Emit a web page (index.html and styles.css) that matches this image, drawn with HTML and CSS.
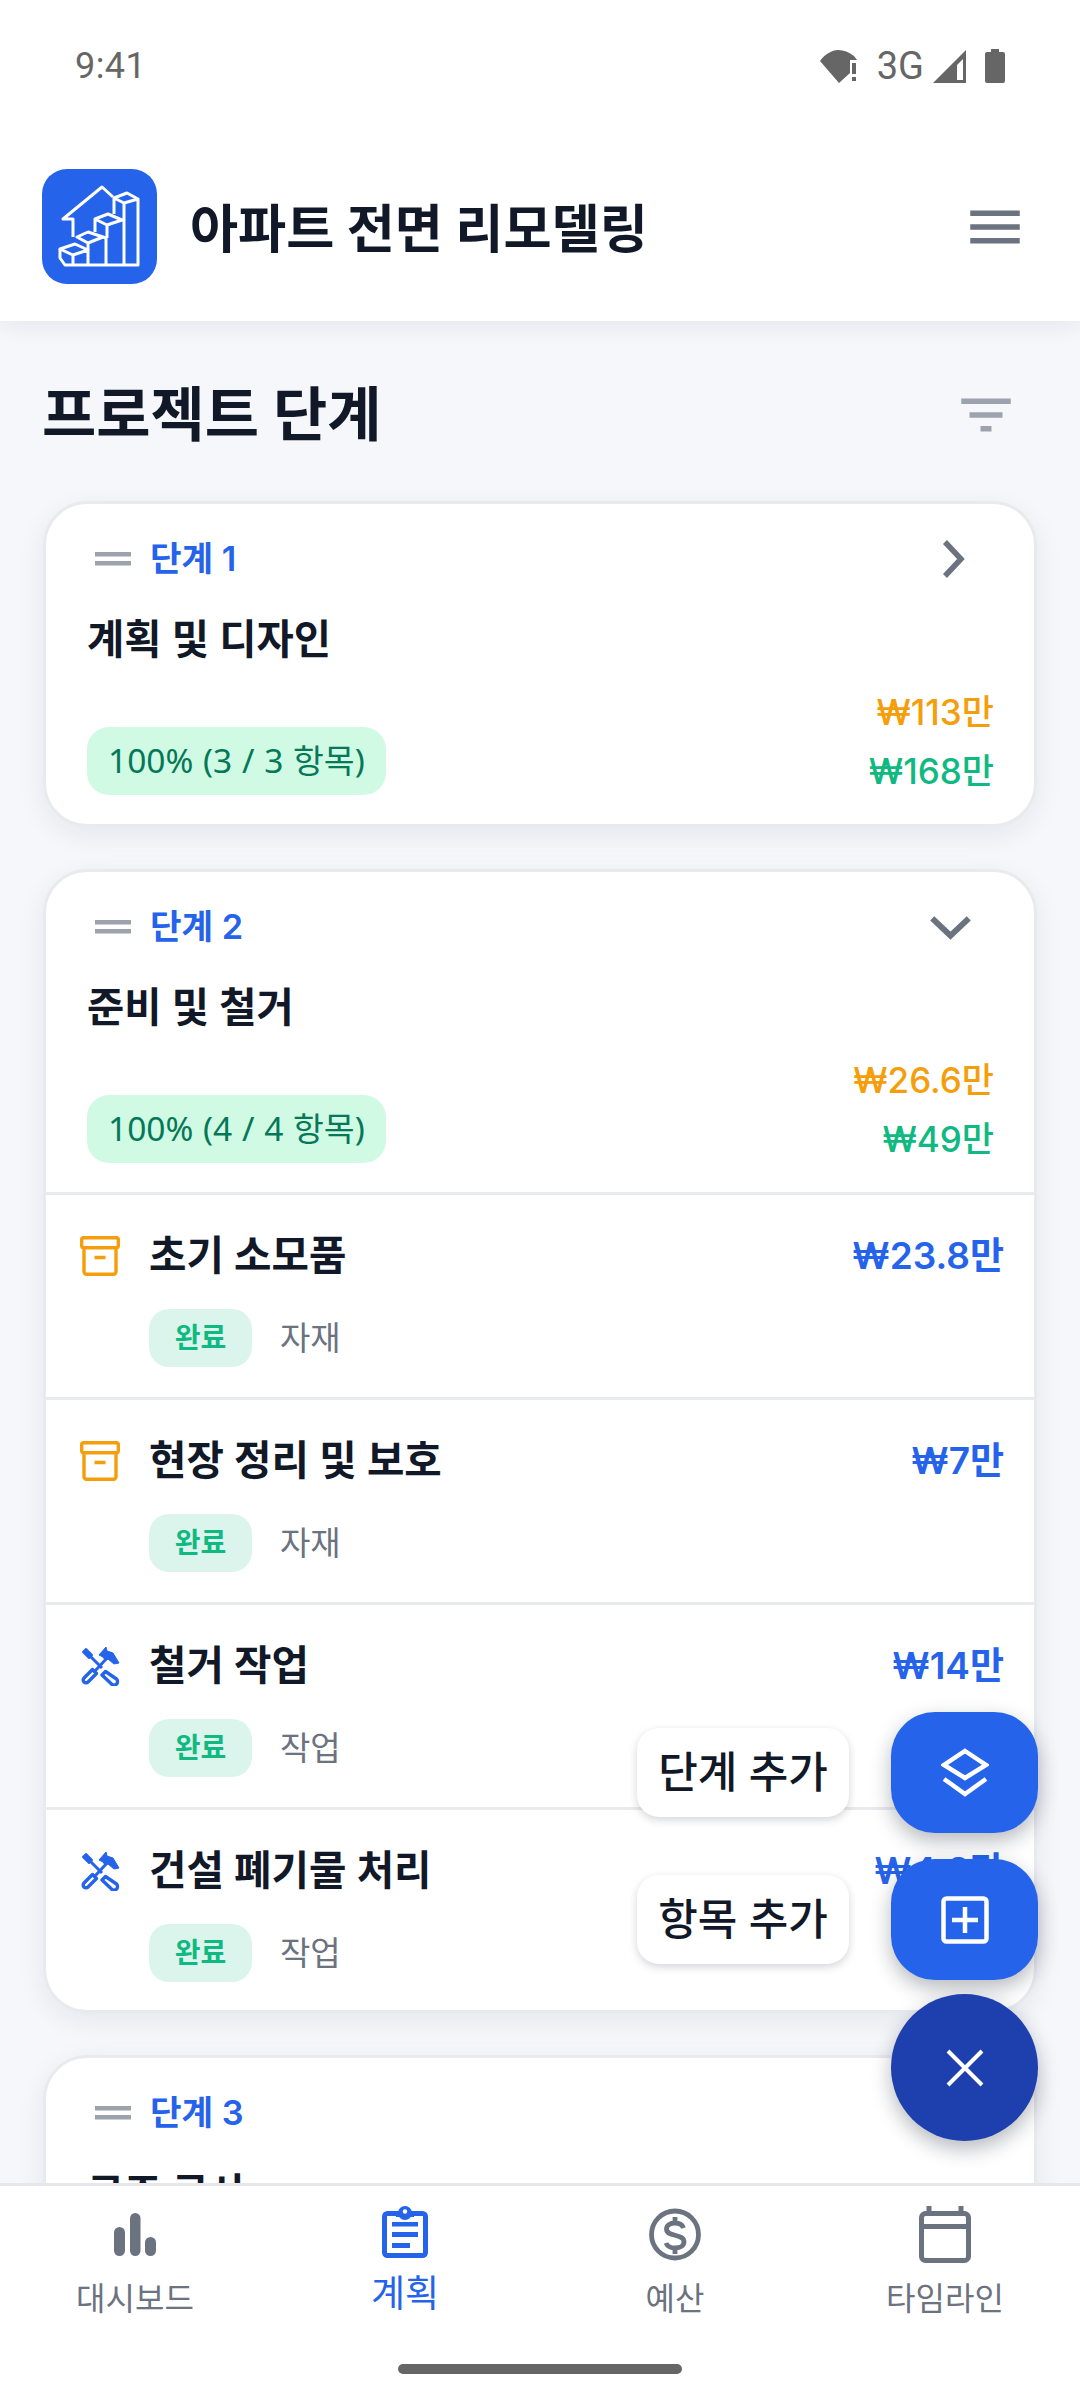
FILE: index.html
```html
<!DOCTYPE html>
<html lang="ko">
<head>
<meta charset="utf-8">
<title>아파트 전면 리모델링</title>
<link rel="stylesheet" href="styles.css">
</head>
<body>
<svg class="defs" aria-hidden="true">
  <symbol id="box" viewBox="0 0 40 40">
    <g fill="none" stroke="#f59e0b" stroke-width="3.400" stroke-linejoin="round"><rect x="1.700" y="1.700" width="36.600" height="10" rx="2"/><path d="M4 11.700v24a2.500 2.500 0 0 0 2.500 2.500h27a2.500 2.500 0 0 0 2.500-2.500v-24M14.500 21.500h11"/></g>
  </symbol>
  <symbol id="tools" viewBox="0 0 40 40">
    <g fill="none" stroke="#2563eb" stroke-linejoin="round">
      <path d="M3 6l3-3 6 6-3 3z" fill="#2563eb" stroke-width="2"/>
      <path d="M9 9l13 13" stroke-width="3"/>
      <path d="M12.500 23.500l4 4L8 36a2.800 2.800 0 0 1-4-4z" stroke-width="3.400"/>
      <path d="M25.500 25.500l-3.500 3.500L31.500 38a2.500 2.500 0 0 0 5-5z" stroke-width="3.400"/>
      <path d="M15 25 28 11" stroke-width="3"/>
      <path d="M19 9l7-8 1 4 6 2 6 10-5 1-6-5-3 1-2-3z" fill="#2563eb" stroke-width="1"/>
    </g>
  </symbol>
  <symbol id="drag" viewBox="0 0 36 14"><path d="M0 0h36v4.500H0zM0 9h36v4.500H0z" fill="#9ca3af"/></symbol>
</svg>
<div class="app">
  <div class="status">
    <span class="clock">9:41</span>
    <div class="status-icons">
      <svg class="st-wifi" viewBox="0 0 38 33"><path d="M0 11C5 4 12 0 18 0c6 0 11 2 16 6l3 4h-7v13l-11 10z" fill="#666"/><path d="M32 13h4v11h-4zM32 27h4v4h-4z" fill="#666"/></svg>
      <span class="st-3g">3G</span>
      <svg class="st-signal" viewBox="0 0 33 33"><path d="M0 33 33 0v33zM24 30h6V9l-6 6z" fill="#666" fill-rule="evenodd"/></svg>
      <svg class="st-batt" viewBox="0 0 20 34"><path d="M6 0h8v3h4a2 2 0 0 1 2 2v27a2 2 0 0 1-2 2H2a2 2 0 0 1-2-2V5a2 2 0 0 1 2-2h4z" fill="#666"/></svg>
    </div>
  </div>

  <header class="topbar">
    <div class="logo">
      <svg viewBox="0 0 115 115" fill="none" stroke="#fff" stroke-width="3" stroke-linejoin="round">
        <path d="M31 68V50H21L60 18l11 10"/>
        <path d="M72 29l13-5 11 6-14 4zM96 30v66H23l-5-7V80M72 29v16"/>
        <path d="M18 80l15-5 13 6-15 5zM18 80l13 6v10M31 86l15-5v15"/>
        <path d="M35 68l11-5 15 5-15 6zM61 68l3 1v27M46 74v7"/>
        <path d="M53 50l13-5 14 6-15 5zM53 50v13M65 56v13M82 34v62"/>
      </svg>
    </div>
    <h1 class="app-title">아파트 전면 리모델링</h1>
    <svg class="menu-icon" viewBox="0 0 24 24"><path d="M3 6h18v2H3zM3 11h18v2H3zM3 16h18v2H3z" fill="#6b7280"/></svg>
  </header>

  <main class="content">
    <div class="section-head">
      <h2 class="section-title">프로젝트 단계</h2>
      <svg class="filter-icon" viewBox="0 0 24 24"><path d="M3 6h18v2H3zM6 11h12v2H6zM10 16h4v2h-4z" fill="#9ca3af"/></svg>
    </div>

    <section class="card">
      <div class="phase">
        <div class="phase-top">
          <svg class="drag"><use href="#drag"/></svg>
          <span class="phase-label">단계 1</span>
          <svg class="chev-right" viewBox="0 0 24 40"><path d="M4 3l16 17L4 37" fill="none" stroke="#6b7280" stroke-width="5.500"/></svg>
        </div>
        <div class="phase-name">계획 및 디자인</div>
        <div class="phase-bottom">
          <span class="progress">100% (3 / 3 항목)</span>
          <div class="amounts">
            <span class="amt-plan">₩113만</span>
            <span class="amt-real">₩168만</span>
          </div>
        </div>
      </div>
    </section>

    <section class="card">
      <div class="phase">
        <div class="phase-top">
          <svg class="drag"><use href="#drag"/></svg>
          <span class="phase-label">단계 2</span>
          <svg class="chev-down" viewBox="0 0 40 24"><path d="M3 4l17 16L37 4" fill="none" stroke="#6b7280" stroke-width="5.500"/></svg>
        </div>
        <div class="phase-name">준비 및 철거</div>
        <div class="phase-bottom">
          <span class="progress">100% (4 / 4 항목)</span>
          <div class="amounts">
            <span class="amt-plan">₩26.6만</span>
            <span class="amt-real">₩49만</span>
          </div>
        </div>
      </div>

      <div class="item">
        <svg class="item-icon"><use href="#box"/></svg>
        <div class="item-main">
          <div class="item-name">초기 소모품</div>
          <div class="item-meta"><span class="done">완료</span><span class="kind">자재</span></div>
        </div>
        <span class="item-amt">₩23.8만</span>
      </div>

      <div class="item">
        <svg class="item-icon"><use href="#box"/></svg>
        <div class="item-main">
          <div class="item-name">현장 정리 및 보호</div>
          <div class="item-meta"><span class="done">완료</span><span class="kind">자재</span></div>
        </div>
        <span class="item-amt">₩7만</span>
      </div>

      <div class="item">
        <svg class="item-icon"><use href="#tools"/></svg>
        <div class="item-main">
          <div class="item-name">철거 작업</div>
          <div class="item-meta"><span class="done">완료</span><span class="kind">작업</span></div>
        </div>
        <span class="item-amt">₩14만</span>
      </div>

      <div class="item">
        <svg class="item-icon"><use href="#tools"/></svg>
        <div class="item-main">
          <div class="item-name">건설 폐기물 처리</div>
          <div class="item-meta"><span class="done">완료</span><span class="kind">작업</span></div>
        </div>
        <span class="item-amt">₩4.2만</span>
      </div>
    </section>

    <section class="card">
      <div class="phase">
        <div class="phase-top">
          <svg class="drag"><use href="#drag"/></svg>
          <span class="phase-label">단계 3</span>
        </div>
        <div class="phase-name">구조 공사</div>
      </div>
    </section>
  </main>

  <div class="fab-menu">
    <div class="fab-row">
      <span class="fab-tag">단계 추가</span>
      <button class="fab">
        <svg viewBox="0 0 48 50" fill="none" stroke="#fff" stroke-width="4.500"><path d="M24 3 45 17 24 30 3 17z"/><path d="M3 31l21 15 21-15"/></svg>
      </button>
    </div>
    <div class="fab-row">
      <span class="fab-tag">항목 추가</span>
      <button class="fab">
        <svg viewBox="0 0 48 48" fill="none" stroke="#fff" stroke-width="4.500"><rect x="2.500" y="2.500" width="43" height="43" rx="3"/><path d="M24 11v26M11 24h26"/></svg>
      </button>
    </div>
    <button class="fab fab-main">
      <svg viewBox="0 0 38 38" fill="none" stroke="#fff" stroke-width="4"><path d="M2 2l34 34M36 2 2 36"/></svg>
    </button>
  </div>

  <nav class="tabs">
    <div class="tab">
      <svg class="tab-icon" viewBox="0 0 66 66"><g fill="#6b7280"><rect x="12" y="22" width="11" height="29" rx="5.500"/><rect x="28" y="8" width="10.500" height="43" rx="5.200"/><rect x="43" y="32" width="11" height="19" rx="5.500"/></g></svg>
      <span class="tab-label">대시보드</span>
    </div>
    <div class="tab tab-active">
      <svg class="tab-icon" viewBox="0 0 66 66"><rect x="12.500" y="8.500" width="41" height="42" rx="3" fill="none" stroke="#2563eb" stroke-width="5"/><circle cx="33" cy="8" r="7" fill="#2563eb"/><rect x="24" y="6" width="18" height="6" fill="#2563eb"/><circle cx="33" cy="6.500" r="2.200" fill="#fff"/><path d="M20 17h26v4.500H20zM20 27h26v5H20zM20 38h18v5H20z" fill="#2563eb"/></svg>
      <span class="tab-label">계획</span>
    </div>
    <div class="tab">
      <svg class="tab-icon" viewBox="0 0 66 66" fill="none" stroke="#6b7280" stroke-width="4.800"><circle cx="33" cy="29.500" r="23.500"/><path d="M41.500 23c-1-3-4.500-5-8.500-5-5 0-8.500 2.500-8.500 6 0 8.500 17.500 4 17.500 13 0 3.500-3.500 6-9 6-4 0-8-2-9-5M33 12v6M33 43v6"/></svg>
      <span class="tab-label">예산</span>
    </div>
    <div class="tab">
      <svg class="tab-icon" viewBox="0 0 66 66" fill="none" stroke="#6b7280" stroke-width="5"><rect x="9.500" y="8.500" width="47" height="47" rx="4"/><path d="M9.500 21.500h47M17 1v6M49 1v6"/></svg>
      <span class="tab-label">타임라인</span>
    </div>
  </nav>
  <div class="home-bar"></div>
</div>
</body>
</html>
```
FILE: styles.css
```css
* { box-sizing: border-box; }
html, body { margin: 0; padding: 0; }
body {
  width: 1080px;
  height: 2400px;
  overflow: hidden;
  background: #fff;
  font-family: Inter, "Noto Sans CJK KR", sans-serif;
  color: #111827;
}
.defs { display: none; }
.app {
  position: relative;
  width: 1080px;
  height: 2400px;
  display: flex;
  flex-direction: column;
  overflow: hidden;
  background: #f5f7fb;
}
.status {
  position: relative;
  z-index: 3;
  height: 130px;
  flex: none;
  background: #fff;
  display: flex;
  justify-content: space-between;
  align-items: flex-start;
  padding: 41px 75px 0 75px;
  font-family: Roboto, sans-serif;
  color: #666;
}
.clock { font-size: 36px; line-height: 50px; letter-spacing: .4px; }
.status-icons { display: flex; align-items: center; height: 50px; }
.st-wifi { width: 38px; height: 33px; margin-right: 19px; }
.st-3g { font-size: 38px; line-height: 50px; margin-right: 9px; }
.st-signal { width: 33px; height: 33px; margin-right: 19px; }
.st-batt { width: 20px; height: 34px; }

.topbar {
  position: relative;
  z-index: 2;
  flex: none;
  height: 191px;
  background: #fff;
  display: flex;
  align-items: center;
  padding: 2px 52px 0 42px;
  box-shadow: 0 6px 22px rgba(17, 24, 39, .07);
}
.logo {
  width: 115px;
  height: 115px;
  border-radius: 25px;
  background: #2563eb;
  flex: none;
}
.logo svg { display: block; width: 115px; height: 115px; }
.app-title { flex: 1; margin: 5px 0 0 33px; font-size: 52.3px; font-weight: 700; line-height: 60px; }
.menu-icon { width: 66px; height: 66px; flex: none; }

.content {
  flex: 1;
  min-height: 0;
  overflow: hidden;
  padding: 0 43px;
}
.section-head {
  height: 179.5px;
  padding: 8px 18px 0 0;
  display: flex;
  align-items: center;
  justify-content: space-between;
}
.section-title { margin: 0 0 0 -1px; font-size: 59px; font-weight: 700; line-height: 70px; }
.filter-icon { width: 66px; height: 66px; }

.card {
  background: #fff;
  border: 3px solid #e8eaee;
  border-radius: 44px;
  margin-bottom: 42px;
  overflow: hidden;
  box-shadow: 0 8px 28px rgba(17, 24, 39, .07);
}
.phase { padding: 25px 40px 29px 41px; }
.phase-top { display: flex; align-items: center; height: 60px; }
.drag { width: 36px; height: 14px; margin: 0 19px 0 8px; flex: none; }
.phase-label { flex: 1; font-size: 34.3px; font-weight: 600; color: #2563eb; line-height: 40px; }
.chev-right { width: 24px; height: 40px; margin-right: 29px; }
.chev-down { width: 43px; height: 26px; margin-right: 22px; }
.phase-name { margin-top: 21px; font-size: 40.5px; font-weight: 600; line-height: 60px; }
.phase-bottom {
  margin-top: 18px;
  display: flex;
  align-items: flex-end;
  justify-content: space-between;
}
.progress {
  height: 68px;
  padding: 0 21px;
  border-radius: 22px;
  background: #d1fae5;
  color: #047857;
  font-family: "Noto Sans", "Noto Sans CJK KR", sans-serif;
  font-size: 33.5px;
  word-spacing: 1px;
  line-height: 66px;
}
.amounts {
  display: flex;
  flex-direction: column;
  align-items: flex-end;
  gap: 11px;
  font-size: 35px;
  font-weight: 500;
  line-height: 48px;
}
.amt-plan { color: #f59e0b; }
.amt-real { color: #10b981; }

.item {
  height: 205px;
  border-top: 3px solid #e8eaee;
  display: flex;
  align-items: flex-start;
  padding: 41px 30px 0 34px;
}
.item:last-child { height: 203px; }
.item-icon { width: 40px; height: 40px; flex: none; margin-right: 29px; }
.item-main { flex: 1; }
.item-name { font-size: 40.7px; font-weight: 600; line-height: 40px; color: #111827; }
.item-meta { margin-top: 33px; display: flex; align-items: center; gap: 28px; }
.done {
  width: 103px;
  height: 58px;
  border-radius: 20px;
  background: #dcf5ec;
  color: #10b981;
  font-size: 28px;
  font-weight: 600;
  line-height: 58px;
  text-align: center;
}
.kind { font-size: 33px; line-height: 58px; color: #6b7280; }
.item-amt { font-size: 37px; font-weight: 600; line-height: 40px; color: #2563eb; }

.fab-menu {
  position: absolute;
  z-index: 3;
  right: 42px;
  top: 1712px;
  display: flex;
  flex-direction: column;
  align-items: flex-end;
  gap: 26px;
}
.fab-row { display: flex; align-items: center; gap: 42px; height: 121px; }
.fab-tag {
  width: 212px;
  height: 89px;
  border-radius: 22px;
  background: #fff;
  font-size: 43px;
  font-weight: 500;
  line-height: 88px;
  text-align: center;
  color: #111827;
  box-shadow: 0 3px 8px rgba(17, 24, 39, .18);
}
.fab {
  width: 147px;
  height: 121px;
  border: 0;
  padding: 0;
  border-radius: 44px;
  background: #2563eb;
  display: flex;
  align-items: center;
  justify-content: center;
  box-shadow: 0 8px 20px rgba(17, 24, 39, .3);
}
.fab svg { width: 48px; height: 50px; }
.fab-main {
  height: 147px;
  margin-top: -12px;
  border-radius: 50%;
  background: #1e40af;
}
.fab-main svg { width: 38px; height: 38px; }

.tabs {
  position: relative;
  z-index: 2;
  flex: none;
  height: 150px;
  background: #fff;
  border-top: 3px solid #e5e7eb;
  display: grid;
  grid-template-columns: repeat(4, 270px);
}
.tab { display: flex; flex-direction: column; align-items: center; padding-top: 19px; }
.tab-icon { width: 66px; height: 66px; }
.tab-label { font-size: 32px; line-height: 44px; margin-top: 6px; color: #6b7280; }
.tab-active .tab-label { font-size: 37px; color: #2563eb; margin-top: 1px; }
.home-bar {
  flex: none;
  height: 67px;
  background: #fff;
  position: relative;
}
.home-bar::after {
  content: "";
  position: absolute;
  left: 398px;
  top: 31px;
  width: 284px;
  height: 10px;
  border-radius: 5px;
  background: #666;
}
```
